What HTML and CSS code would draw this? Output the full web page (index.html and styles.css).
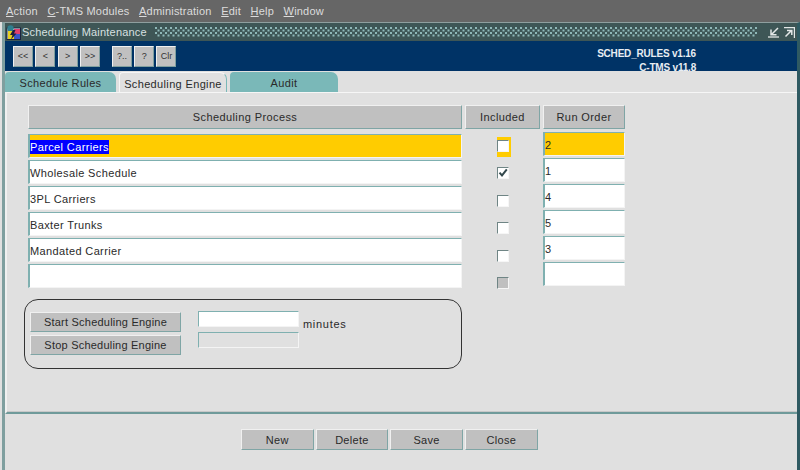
FILE: index.html
```html
<!DOCTYPE html>
<html lang="en">
<head>
  <meta charset="UTF-8">
  <title>Scheduling Maintenance</title>
  <link rel="stylesheet" href="styles.css">
</head>
<body>
  <div class="menubar">
    <span><u>A</u>ction</span>
    <span><u>C</u>-TMS Modules</span>
    <span><u>A</u>dministration</span>
    <span><u>E</u>dit</span>
    <span><u>H</u>elp</span>
    <span><u>W</u>indow</span>
  </div>

  <div class="window">
    <div class="titlebar">
      <svg class="app-icon" width="15" height="15" viewBox="0 0 15 15">
        <rect x="1" y="3" width="13.5" height="11.5" fill="#f0f0f8" stroke="#1c2440" stroke-width="1"/>
        <circle cx="4.5" cy="3.5" r="3.2" fill="#2f7f8f"/>
        <rect x="2" y="6" width="6" height="8" fill="#e8d020"/>
        <rect x="8" y="4" width="6" height="5" fill="#e04070"/>
        <rect x="8" y="9" width="6" height="5" fill="#3a56c8"/>
        <path d="M7 5 L4 10 L6.5 10 L5 14.5 L10.5 8.5 L8 8.5 L9.5 5 Z" fill="#1c2040"/>
      </svg>
      <span class="title-text">Scheduling Maintenance</span>
      <div class="title-dots"></div>
      <svg class="win-btn" width="12" height="11" viewBox="0 0 12 11">
        <path d="M0 10 H11" stroke="#e4e8e8" stroke-width="1.3"/>
        <path d="M10 1 L4 7 M3 2.5 V7.8 H8.5" stroke="#e4e8e8" stroke-width="1.5" fill="none"/>
      </svg>
      <svg class="win-btn" width="11" height="11" viewBox="0 0 11 11">
        <path d="M0 .6 H10.4 V11" stroke="#e4e8e8" stroke-width="1.2" fill="none"/>
        <path d="M1.5 9.5 L7 4 M3 3.4 H7.8 V8" stroke="#e4e8e8" stroke-width="1.5" fill="none"/>
      </svg>
    </div>

    <div class="toolbar">
      <div class="tool-group">
        <button class="tool-btn">&lt;&lt;</button>
        <button class="tool-btn">&lt;</button>
        <button class="tool-btn">&gt;</button>
        <button class="tool-btn">&gt;&gt;</button>
      </div>
      <div class="tool-group">
        <button class="tool-btn">?..</button>
        <button class="tool-btn">?</button>
        <button class="tool-btn">Clr</button>
      </div>
      <div class="version">
        <div>SCHED_RULES v1.16</div>
        <div>C-TMS v11.8</div>
      </div>
    </div>

    <div class="tabs">
      <div class="tab tab-rules">Schedule Rules</div>
      <div class="tab tab-active">Scheduling Engine</div>
      <div class="tab tab-audit">Audit</div>
    </div>

    <div class="panel">
      <div class="grid">
        <div class="col col-process">
          <div class="head">Scheduling Process</div>
          <div class="field current"><span class="selected">Parcel Carriers</span></div>
          <div class="field">Wholesale Schedule</div>
          <div class="field">3PL Carriers</div>
          <div class="field">Baxter Trunks</div>
          <div class="field">Mandated Carrier</div>
          <div class="field"></div>
        </div>
        <div class="col col-included">
          <div class="head">Included</div>
          <div class="check-list">
            <div class="check-cell current"><span class="check"></span></div>
            <div class="check-cell">
              <span class="check">
                <svg width="10" height="10" viewBox="0 0 10 10"><path d="M1.5 4.6 L4 7.4 L8.8 1.4" stroke="#33484c" stroke-width="2" fill="none"/></svg>
              </span>
            </div>
            <div class="check-cell"><span class="check"></span></div>
            <div class="check-cell"><span class="check"></span></div>
            <div class="check-cell"><span class="check"></span></div>
            <div class="check-cell"><span class="check disabled"></span></div>
          </div>
        </div>
        <div class="col col-order">
          <div class="head">Run Order</div>
          <div class="field current">2</div>
          <div class="field">1</div>
          <div class="field">4</div>
          <div class="field">5</div>
          <div class="field">3</div>
          <div class="field"></div>
        </div>
      </div>

      <div class="engine-box">
        <div class="engine-buttons">
          <button class="btn engine-btn">Start Scheduling Engine</button>
          <button class="btn engine-btn">Stop Scheduling Engine</button>
        </div>
        <div class="engine-inputs">
          <div class="small-field"></div>
          <div class="small-field off"></div>
        </div>
        <span class="minutes">minutes</span>
      </div>
    </div>

    <div class="actions">
      <button class="btn action-btn">New</button>
      <button class="btn action-btn">Delete</button>
      <button class="btn action-btn">Save</button>
      <button class="btn action-btn">Close</button>
    </div>
  </div>
</body>
</html>
```

FILE: styles.css
```css
* {
  box-sizing: border-box;
}

html, body {
  margin: 0;
  padding: 0;
}

body {
  width: 800px;
  height: 470px;
  overflow: hidden;
  background-color: #e0e0e0;
  font-family: "Liberation Sans", Arial, sans-serif;
  font-size: 11px;
  color: #2a2a2a;
}

button {
  font-family: inherit;
  padding: 0;
  margin: 0;
}

/* menu */
.menubar {
  height: 22px;
  display: flex;
  align-items: center;
  gap: 9.6px;
  padding: 0 0 1px 6px;
  background-color: #666666;
  color: #dcdcdc;
  font-size: 11px;
  letter-spacing: 0.2px;
}

/* window frame */
.window {
  margin-left: 2px;
  width: 798px;
  height: 448px;
  background-color: #e0e0e0;
  border-top: 1px solid #8f9f9f;
  border-left: 3px solid #7f9f9f;
  border-right: 3px solid #2f5a62;
}

.titlebar {
  height: 18px;
  display: flex;
  align-items: center;
  background-color: #3e5656;
  padding: 0 2px 0 1px;
}

.app-icon {
  flex: none;
}

.title-text {
  margin-left: 1px;
  color: #d8e0e0;
  letter-spacing: 0.2px;
  white-space: nowrap;
}

.title-dots {
  flex: 1;
  height: 10px;
  margin: 0 7px 0 8px;
  background-image:
    radial-gradient(circle at 1px 1px, #8fb8b8 0.8px, transparent 1px),
    radial-gradient(circle at 1px 1px, #8fb8b8 0.8px, transparent 1px);
  background-size: 5px 5px;
  background-position: 0 0, 2.5px 2.5px;
}

.win-btn {
  flex: none;
  margin-left: 4px;
}

.toolbar {
  height: 30px;
  display: flex;
  align-items: center;
  gap: 12px;
  background-color: #003366;
  padding-left: 8px;
  position: relative;
}

.tool-group {
  display: flex;
  gap: 2.3px;
}

.tool-btn {
  width: 20px;
  height: 21px;
  background-color: #c0c0c0;
  border: 1px solid;
  border-color: #f0f0f0 #7f9f9f #7f9f9f #f0f0f0;
  color: #333;
  font-size: 9px;
}

.version {
  position: absolute;
  right: 101px;
  top: 6px;
  text-align: right;
  color: #e8edf2;
  font-weight: bold;
  font-size: 10px;
  line-height: 14px;
  letter-spacing: -0.2px;
}

/* tabs */
.tabs {
  height: 21px;
  display: flex;
  gap: 3px;
  padding-top: 1px;
}

.tab {
  width: 111px;
  height: 20px;
  padding-top: 2px;
  display: flex;
  align-items: center;
  justify-content: center;
  background-color: #7ab8b8;
  border-radius: 4px 7px 0 0;
  font-size: 11px;
  letter-spacing: 0.35px;
}

.tab-active {
  width: 108px;
  background-color: #e0e0e0;
  border-top: 1px solid #f6f6f6;
  border-left: 1px solid #f6f6f6;
  border-right: 1px solid #7ab8b8;
}

.tab-audit {
  width: 108px;
}

/* main panel */
.panel {
  height: 322px;
  padding: 12px 0 0 21px;
  border-top: 1px solid #f6f6f6;
  border-left: 2px solid #f0f0f0;
  border-bottom: 2px solid #6f9a9a;
  box-shadow: inset 0 -1px 0 #c8c8c8;
}

.grid {
  height: 183px;
  display: flex;
  align-items: flex-start;
  gap: 3px;
}

.col {
  display: flex;
  flex-direction: column;
}

.col-process {
  width: 434px;
  gap: 2px;
}

.col-included {
  width: 75px;
}

.col-order {
  width: 82px;
  gap: 2px;
}

.head {
  height: 24px;
  padding-bottom: 1px;
  display: flex;
  align-items: center;
  justify-content: center;
  background-color: #c0c0c0;
  border: 1px solid;
  border-color: #f0f0f0 #7fa5a5 #7fa5a5 #f0f0f0;
  letter-spacing: 0.4px;
}

.col-process .head {
  margin-bottom: 3px;
}

.col-order .head {
  margin-bottom: 1px;
}

.field {
  height: 24px;
  padding-top: 1px;
  display: flex;
  align-items: center;
  background-color: #ffffff;
  border: 1px solid;
  border-width: 1px 1px 1px 2px;
  border-color: #7fb0b0 #f4f4f4 #f4f4f4 #7fb0b0;
  font-size: 11px;
  letter-spacing: 0.37px;
  white-space: nowrap;
}

.col-order .field {
  padding-top: 2px;
}

.field.current {
  background-color: #ffcc00;
}

.selected {
  background-color: #0000ff;
  color: #ffffff;
  line-height: 14px;
}

.check-list {
  display: flex;
  flex-direction: column;
  padding: 8px 0 0 32px;
  gap: 13.4px;
}

.check-cell {
  width: 14px;
  height: 14px;
}

.check-cell.current {
  height: 20px;
  padding-top: 3px;
  margin-bottom: -3px;
  background-color: #ffcc00;
}

.check {
  width: 12px;
  height: 12px;
  display: block;
  background-color: #ffffff;
  border: 1px solid;
  border-color: #6f8585 #f6f6f6 #f6f6f6 #6f8585;
}

.check svg {
  display: block;
}

.check.disabled {
  background-color: #c0c0c0;
}

/* engine box */
.engine-box {
  width: 438px;
  height: 70px;
  margin-top: 11px;
  margin-left: -4px;
  padding: 12px 5px 0 5px;
  display: flex;
  align-items: flex-start;
  border: 1px solid #333;
  border-radius: 14px;
}

.engine-buttons {
  display: flex;
  flex-direction: column;
  gap: 3px;
}

.btn {
  background-color: #c0c0c0;
  border: 1px solid;
  border-color: #f0f0f0 #7fa5a5 #7fa5a5 #f0f0f0;
  color: #2a2a2a;
  font-size: 11px;
  letter-spacing: 0.3px;
}

.engine-btn {
  width: 151px;
  height: 20px;
  letter-spacing: 0.22px;
}

.engine-inputs {
  display: flex;
  flex-direction: column;
  gap: 5px;
  margin-left: 17px;
  margin-top: -1px;
}

.small-field {
  width: 101px;
  height: 16px;
  background-color: #ffffff;
  border: 1px solid;
  border-color: #7fb0b0 #f4f4f4 #f4f4f4 #7fb0b0;
}

.small-field.off {
  background-color: #e0e0e0;
}

.minutes {
  margin-left: 4px;
  margin-top: 6px;
  letter-spacing: 0.7px;
}

/* bottom buttons */
.actions {
  display: flex;
  gap: 2.2px;
  padding: 15px 0 0 236px;
}

.action-btn {
  width: 72.5px;
  height: 21px;
}
```
